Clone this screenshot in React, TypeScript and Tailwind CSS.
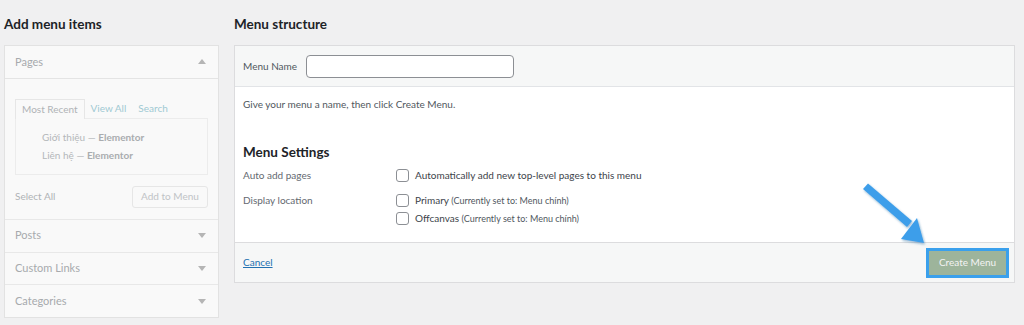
import React from 'react'

const font = { fontFamily: 'Lato, "Noto Sans", Arial, sans-serif' }

type Section = { label: string }

const collapsed: Section[] = [{ label: 'Posts' }, { label: 'Custom Links' }, { label: 'Categories' }]

function Caret({ up }: { up?: boolean }) {
  return (
    <svg width="8" height="5" viewBox="0 0 8 5" className="text-[#b5b5b5]">
      {up ? <path d="M0 5 L4 0 L8 5 Z" fill="currentColor" /> : <path d="M0 0 L4 5 L8 0 Z" fill="currentColor" />}
    </svg>
  )
}

function Checkbox() {
  return <span className="inline-block w-[13px] h-[13px] rounded-[3px] border border-[#8c8f94] bg-white shrink-0" />
}

function LeftColumn() {
  return (
    <div className="w-[215px] shrink-0">
      <h2 className="h-[45px] pt-[14px] text-[13.5px] leading-[20px] font-bold text-[#1d2327]">Add menu items</h2>
      <div className="border border-[#e2e2e2] bg-[#f9f9f9] h-[273px] flex flex-col">
        <div className="h-[33px] flex items-center justify-between pl-[10px] pr-[12px] border-b border-[#e4e4e4]">
          <span className="text-[11px] text-[#a7aaad]">Pages</span>
          <Caret up />
        </div>
        <div className="pt-[19px] px-[10px]">
          <div className="flex items-end text-[10px] leading-[19px] h-[20px]">
            <span className="px-[6px] border-t border-l border-r border-[#e6e6e6] bg-[#f9f9f9] text-[#b0b3b6] relative top-px">Most Recent</span>
            <span className="px-[6px] text-[#9fc9d3]">View All</span>
            <span className="px-[6px] text-[#9fc9d3]">Search</span>
          </div>
          <div className="border border-[#ececec] h-[57px] pt-[9px] pl-[26px] text-[10px] leading-[18px] text-[#b4b7ba]">
            <div>
              Giới thiệu — <span className="font-bold text-[#a9acaf]">Elementor</span>
            </div>
            <div>
              Liên hệ — <span className="font-bold text-[#a9acaf]">Elementor</span>
            </div>
          </div>
          <div className="flex items-center justify-between h-[44px]">
            <span className="text-[10px] text-[#b0b3b6]">Select All</span>
            <span className="h-[22px] w-[76px] border border-[#e6e6e6] rounded-[3px] flex items-center justify-center text-[10px] text-[#c0c3c6] bg-[#f9f9f9]">
              Add to Menu
            </span>
          </div>
        </div>
        {collapsed.map(s => (
          <div key={s.label} className="h-[33px] flex items-center justify-between pl-[10px] pr-[12px] border-t border-[#e8e8e8]">
            <span className="text-[11px] text-[#a7aaad]">{s.label}</span>
            <Caret />
          </div>
        ))}
      </div>
    </div>
  )
}

function RightColumn() {
  return (
    <div className="flex-1 mr-[9px]">
      <h2 className="h-[45px] pt-[14px] text-[13.5px] leading-[20px] font-bold text-[#1d2327]">Menu structure</h2>
      <div className="border border-[#dcdcde] bg-white">
        <div className="h-[41px] bg-[#f6f7f7] border-b border-[#e2e4e7] flex items-center pl-[8px]">
          <span className="w-[63px] text-[10px] text-[#50575e]">Menu Name</span>
          <span className="w-[208px] h-[23px] rounded-[4px] border border-[#8c8f94] bg-white" />
        </div>
        <div className="h-[155px] pl-[8px] pt-[9px]">
          <p className="text-[10px] leading-[16px] text-[#50575e]">Give your menu a name, then click Create Menu.</p>
          <h3 className="mt-[31px] text-[13.5px] leading-[18px] font-bold text-[#1d2327]">Menu Settings</h3>
          <div className="mt-[6px] flex text-[10px] leading-[16px]">
            <div className="w-[153px] text-[#646970]">Auto add pages</div>
            <label className="flex items-center gap-[6px] text-[#3c434a]">
              <Checkbox />
              Automatically add new top-level pages to this menu
            </label>
          </div>
          <div className="mt-[9px] flex text-[10px] leading-[16px]">
            <div className="w-[153px] text-[#646970]">Display location</div>
            <div className="flex flex-col gap-[1px]">
              <label className="flex items-center gap-[6px] text-[#3c434a]">
                <Checkbox />
                <span>
                  Primary <span className="text-[9px] text-[#50575e]">(Currently set to: Menu chính)</span>
                </span>
              </label>
              <label className="flex items-center gap-[6px] text-[#3c434a]">
                <Checkbox />
                <span>
                  Offcanvas <span className="text-[9px] text-[#50575e]">(Currently set to: Menu chính)</span>
                </span>
              </label>
            </div>
          </div>
        </div>
        <div className="h-[40px] bg-[#f6f7f7] border-t border-[#dcdcde] flex items-center justify-between pl-[8px] pr-[5px]">
          <a className="text-[10px] text-[#2271b1] underline">Cancel</a>
          <span className="h-[30px] w-[83px] border-[3px] border-[#3aa0ec] bg-[#9db49b] flex items-center justify-center text-[10px] text-[#f3f3f3]">
            Create Menu
          </span>
        </div>
      </div>
    </div>
  )
}

export default function App() {
  return (
    <div className="relative w-[1024px] h-[325px] bg-[#f0f0f1] flex gap-[15px] pl-[4px] overflow-hidden" style={font}>
      <LeftColumn />
      <RightColumn />
      <svg className="absolute left-[853px] top-[178px]" width="80" height="72" viewBox="0 0 80 72">
        <defs>
          <filter id="sh" x="-20%" y="-20%" width="140%" height="140%">
            <feDropShadow dx="1" dy="1.5" stdDeviation="1.2" floodColor="#1f5f99" floodOpacity="0.45" />
          </filter>
        </defs>
        <g filter="url(#sh)" fill="#3d9eea">
          <path d="M10 11 L15 5.5 L59 43 L54 49 Z" />
          <path d="M48 61 L71 65 L64 40 Z" />
        </g>
      </svg>
    </div>
  )
}
